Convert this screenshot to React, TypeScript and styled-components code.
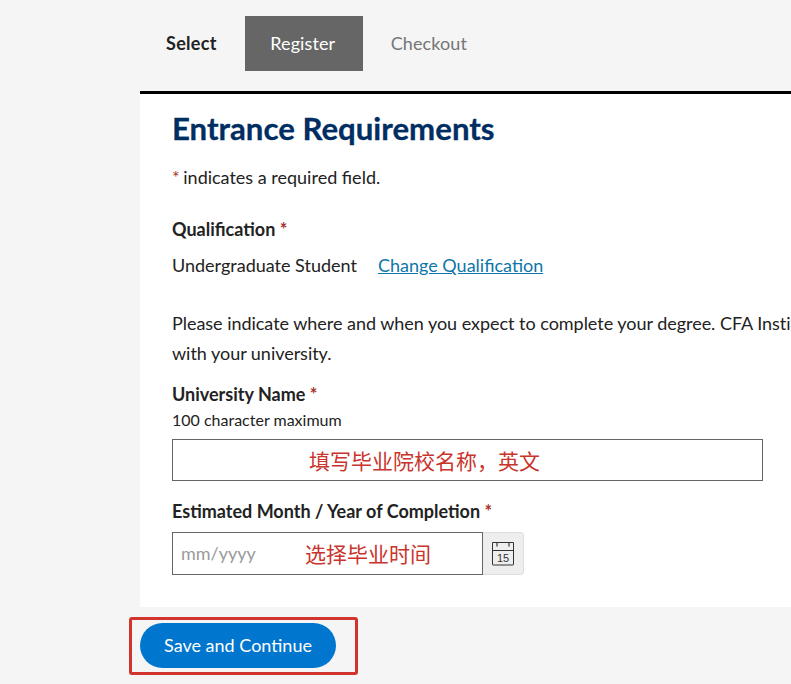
import React from "react";
import styled, { createGlobalStyle } from "styled-components";

const Global = createGlobalStyle`
  html, body { margin: 0; padding: 0; background: #f5f5f5; }
  body { font-family: Lato, "Noto Sans CJK SC", sans-serif; color: #222; }
`;

const Page = styled.div`
  position: relative;
  width: 791px;
  height: 684px;
  overflow: hidden;
  padding-left: 140px;
  box-sizing: border-box;
  background: #f5f5f5;
`;

const Steps = styled.nav`
  width: 1000px;
  height: 91px;
  box-sizing: border-box;
  padding: 16px 0 20px 26px;
  display: flex;
  align-items: stretch;
`;

const Step = styled.div<{ $state: "done" | "active" | "todo" }>`
  display: flex;
  align-items: center;
  justify-content: center;
  padding-bottom: 2px;
  padding-right: ${(p) => (p.$state === "active" ? "2px" : "0")};
  box-sizing: border-box;
  font-size: 18px;
  font-weight: ${(p) => (p.$state === "done" ? 700 : 400)};
  color: ${(p) => (p.$state === "done" ? "#222" : p.$state === "active" ? "#fff" : "#757575")};
  background: ${(p) => (p.$state === "active" ? "#666" : "transparent")};
  width: ${(p) => (p.$state === "active" ? "118px" : "auto")};
  margin-left: ${(p) => (p.$state === "done" ? "0" : "28px")};
  letter-spacing: ${(p) => (p.$state === "done" ? "0.3px" : "0.1px")};
`;

const Panel = styled.main`
  width: 1000px;
  height: 516px;
  box-sizing: border-box;
  border-top: 3px solid #000;
  background: #fff;
  padding: 16px 0 0 32px;
`;

const Title = styled.h1`
  margin: 0;
  font-size: 31.2px;
  line-height: 36px;
  font-weight: 700;
  -webkit-text-stroke: 0.3px #002d62;
  color: #002d62;
`;

const Required = styled.span`
  color: #a8322c;
`;

const NoteMark = styled(Required)`
  margin-right: -1px;
`;

const Note = styled.p`
  margin: 19px 0 0;
  font-size: 18px;
  line-height: 24px;
`;

const Label = styled.div<{ $top: number }>`
  margin-top: ${(p) => p.$top}px;
  font-size: 18px;
  line-height: 24px;
  font-weight: 700;
`;

const QualificationRow = styled.div`
  margin-top: 12px;
  display: flex;
  gap: 21px;
  font-size: 18px;
  line-height: 24px;
`;

const ChangeLink = styled.a`
  color: #0e76a8;
  text-decoration: underline;
`;

const Paragraph = styled.p`
  margin: 31px 0 0;
  width: 900px;
  font-size: 18px;
  line-height: 30px;
  letter-spacing: -0.03px;
`;

const Hint = styled.div`
  font-size: 16px;
  line-height: 20px;
  margin-top: 4px;
`;

const TextBox = styled.div`
  margin-top: 9px;
  width: 591px;
  height: 42px;
  box-sizing: border-box;
  border: 1px solid #666;
  background: #fff;
`;

const DateRow = styled.div`
  margin-top: 9px;
  display: flex;
`;

const DateBox = styled.div`
  width: 311px;
  height: 43px;
  box-sizing: border-box;
  border: 1px solid #666;
  padding: 0 0 2px 8px;
  display: flex;
  align-items: center;
  font-size: 18px;
  color: #9a9a9a;
`;

const CalendarButton = styled.div`
  width: 41px;
  height: 43px;
  box-sizing: border-box;
  background: #eee;
  border: 1px solid #ddd;
  border-left: none;
  border-radius: 0 4px 4px 0;
  display: flex;
  align-items: center;
  justify-content: center;
`;

const Footer = styled.div`
  padding-top: 16px;
`;

const SaveButton = styled.button`
  width: 196px;
  height: 45px;
  border: none;
  border-radius: 23px;
  background: #0076ce;
  color: #fff;
  font-family: inherit;
  font-size: 18px;
  padding: 0 0 2px;
`;

const Annotation = styled.span<{ $x: number; $y: number }>`
  position: absolute;
  left: ${(p) => p.$x}px;
  top: ${(p) => p.$y}px;
  font-family: "Noto Sans CJK SC", sans-serif;
  font-size: 21px;
  line-height: 28px;
  color: #c9342c;
  white-space: nowrap;
`;

const Highlight = styled.div`
  position: absolute;
  left: 129px;
  top: 617px;
  width: 229px;
  height: 58px;
  box-sizing: border-box;
  border: 3px solid #d0342c;
  border-radius: 3px;
`;

const CalendarIcon = () => (
  <svg width="24" height="25" viewBox="0 0 24 25" fill="none" stroke="#333" strokeWidth="1">
    <path d="M1.5 1.5h21v22a.5.5 0 0 1-.5.5H2a.5.5 0 0 1-.5-.5z" />
    <path d="M1.5 9.5h21" />
    <path d="M6 2v3.5M18 2v3.5" strokeWidth="1.6" stroke="#666" />
    <text x="12" y="21" textAnchor="middle" fontFamily="Liberation Sans, sans-serif" fontSize="11" fill="#333" stroke="none">
      15
    </text>
  </svg>
);

export default function App() {
  return (
    <Page>
      <Global />
      <Steps>
        <Step $state="done">Select</Step>
        <Step $state="active">Register</Step>
        <Step $state="todo">Checkout</Step>
      </Steps>
      <Panel>
        <Title>Entrance Requirements</Title>
        <Note>
          <NoteMark>*</NoteMark> indicates a required field.
        </Note>
        <Label $top={28}>
          Qualification <Required>*</Required>
        </Label>
        <QualificationRow>
          <span>Undergraduate Student</span>
          <ChangeLink>Change Qualification</ChangeLink>
        </QualificationRow>
        <Paragraph>
          Please indicate where and when you expect to complete your degree. CFA Institute will verify this information
          <br />
          with your university.
        </Paragraph>
        <Label $top={14}>
          University Name <Required>*</Required>
        </Label>
        <Hint>100 character maximum</Hint>
        <TextBox />
        <Label $top={18}>
          Estimated Month / Year of Completion <Required>*</Required>
        </Label>
        <DateRow>
          <DateBox>mm/yyyy</DateBox>
          <CalendarButton>
            <CalendarIcon />
          </CalendarButton>
        </DateRow>
      </Panel>
      <Footer>
        <SaveButton>Save and Continue</SaveButton>
      </Footer>
      <Annotation $x={309} $y={446}>填写毕业院校名称，英文</Annotation>
      <Annotation $x={305} $y={539}>选择毕业时间</Annotation>
      <Highlight />
    </Page>
  );
}
